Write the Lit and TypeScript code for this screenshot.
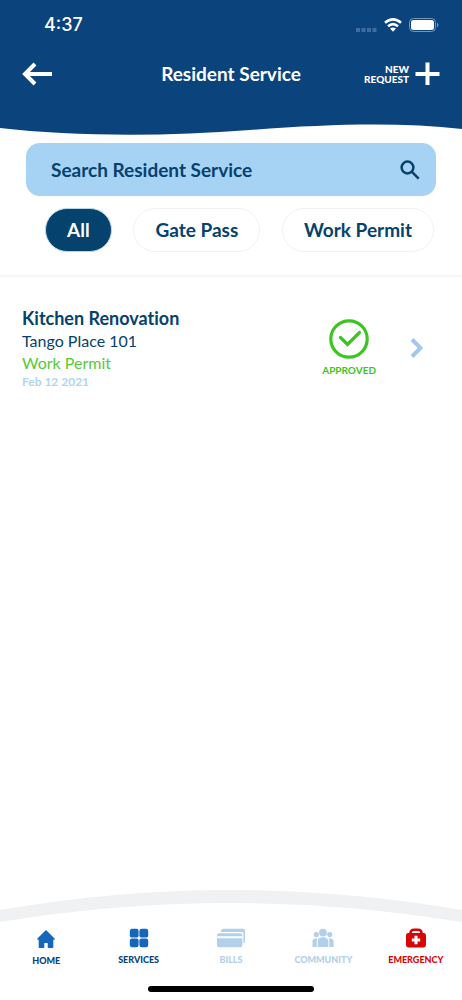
import { LitElement, html, css, svg } from "lit";
import { customElement, state } from "lit/decorators.js";

const icons: Record<string, unknown> = {
  home: svg`<svg width="20" height="20" viewBox="0 0 20 20" aria-hidden="true"><path fill="currentColor" stroke="currentColor" stroke-width="1.6" stroke-linejoin="round" d="M10 2 18 10H16.500V18.300H12.500V13.200H7.500V18.300H3.500V10H2Z"/></svg>`,
  services: svg`<svg width="20" height="20" viewBox="0 0 20 20" aria-hidden="true"><g fill="currentColor"><rect x=".8" y=".8" width="8.800" height="8.800" rx="2.200"/><rect x="10.400" y=".8" width="8.800" height="8.800" rx="2.200"/><rect x=".8" y="10.400" width="8.800" height="8.800" rx="2.200"/><rect x="10.400" y="10.400" width="8.800" height="8.800" rx="2.200"/></g></svg>`,
  bills: svg`<svg width="30" height="20" viewBox="0 0 30 20" aria-hidden="true"><path fill="currentColor" d="M4.500 4Q5.500 .8 8 .8H27Q29 .8 29 2.800V13Q29 15 27.400 15.600V5.500Q27.400 4 25.800 4ZM1 8.300Q1 5.200 3 5.200H24.400Q26.400 5.200 26.400 8.300ZM1 10.300H26.400V17.200Q26.400 19.200 24.400 19.200H3Q1 19.200 1 17.200Z"/></svg>`,
  community: svg`<svg width="22" height="20" viewBox="0 0 22 20" aria-hidden="true"><g fill="currentColor"><circle cx="11" cy="4.600" r="3.900"/><circle cx="4.300" cy="6.600" r="2.600"/><circle cx="17.700" cy="6.600" r="2.600"/><path d="M5.700 19V13.500Q5.700 9.200 11 9.200T16.300 13.500V19ZM.5 19V13.500Q.5 10.200 5.300 10.200 4.700 11.500 4.700 13.500V19ZM21.500 19V13.500Q21.500 10.200 16.700 10.200 17.300 11.500 17.300 13.500V19Z"/></g></svg>`,
  emergency: svg`<svg width="22" height="20" viewBox="0 0 22 20" aria-hidden="true"><path fill="none" stroke="currentColor" stroke-width="2.600" d="M5.500 6V5Q5.500 1.800 9 1.800H13Q16.500 1.800 16.500 5V6"/><rect x="1" y="5" width="20" height="14.500" rx="2.400" fill="currentColor"/><path stroke="#fff" stroke-width="3" d="M11 7.800V16.200M6.800 12H15.200"/></svg>`,
};

const tabs = [
  { id: "home", label: "HOME", tone: "home" },
  { id: "services", label: "SERVICES", tone: "active" },
  { id: "bills", label: "BILLS", tone: "muted" },
  { id: "community", label: "COMMUNITY", tone: "muted" },
  { id: "emergency", label: "EMERGENCY", tone: "alert" },
];

const requests = [
  { title: "Kitchen Renovation", place: "Tango Place 101", type: "Work Permit", date: "Feb 12 2021", status: "APPROVED" },
];

@customElement("app-root")
export class AppRoot extends LitElement {
  @state() private filter = "All";

  static styles = css`
    :host {
      display: flex;
      flex-direction: column;
      min-height: 100vh;
      background: #fff;
      color: #05426d;
      font-family: Lato, "Open Sans", sans-serif;
      font-variant-ligatures: none;
    }
    * { box-sizing: border-box; }
    svg { display: block; flex: none; }
    button, a { color: inherit; font: inherit; text-decoration: none; }
    button { background: none; border: 0; padding: 0; cursor: pointer; }
    .header { background: #0b437d; color: #fff; }
    .status-bar { display: flex; justify-content: space-between; align-items: center; height: 50px; padding: 0 23px 0 44px; }
    .time { font: 500 18px/24px Inter, sans-serif; }
    .signals { display: flex; align-items: center; gap: 7px; }
    .title-bar { display: grid; grid-template-columns: 1fr auto 1fr; align-items: center; height: 48px; padding: 0 22px; }
    .title { margin: 0; font-size: 19px; line-height: 24px; font-weight: 700; }
    .new { display: flex; align-items: center; justify-self: end; gap: 6px; text-align: right; font-size: 10px; line-height: 10px; font-weight: 900; }
    .back { justify-self: start; }
    .wave { width: 100%; height: 40px; background: #fff; }
    .search { display: flex; align-items: center; height: 53px; margin: 5px 26px 0; padding: 0 16px 0 25px; border-radius: 14px; background: #a6d2f4; }
    .search-input { flex: 1; min-width: 0; padding: 0; border: 0; outline: 0; background: none; color: #05426d; font: 700 19px/24px Lato, sans-serif; }
    .search-input::placeholder { color: inherit; opacity: 1; }
    .filters { display: flex; justify-content: space-between; padding: 12px 28px 23px 45px; border-bottom: 2px solid #f6f6f6; }
    .chip { height: 44px; padding: 0 21px; border: 1px solid #f0f2f3; border-radius: 22px; font-size: 19px; line-height: 24px; font-weight: 700; }
    .chip-on { background: #05426d; border-color: #b5d8ef; color: #fff; }
    .list { flex: 1; margin: 0; padding: 30px 0 0; list-style: none; }
    .request { display: flex; align-items: center; padding: 0 38px 0 22px; }
    .details { flex: 1; }
    .name { margin: 0; font-size: 18px; line-height: 23px; font-weight: 700; }
    .line { margin: 0; font-size: 16px; line-height: 22px; }
    .type { color: #56ca38; }
    .date { display: block; font-size: 12px; line-height: 15px; font-weight: 700; color: #b0d5ef; }
    .badge { display: flex; flex-direction: column; align-items: center; gap: 4px; margin-right: 34px; color: #3cc521; font-size: 10px; line-height: 14px; font-weight: 700; }
    .arc { width: 100%; height: 34px; }
    .tabs { display: grid; grid-template-columns: repeat(5, 1fr); }
    .tab { display: flex; flex-direction: column; align-items: center; gap: 6px; padding-top: 4px; font-size: 9px; line-height: 12px; font-weight: 900; }
    .home { padding-top: 5px; }
    .home, .active { color: #1467ba; }
    .home .tab-label, .active .tab-label { color: #07437b; }
    .muted { color: #b1d0eb; }
    .alert { color: #d90505; }
    .indicator { width: 36%; height: 6px; margin: 19px auto 8px; border-radius: 3px; background: #000; }
  `;

  render() {
    return html`
      <header class="header">
        <div class="status-bar">
          <span class="time">4:37</span>
          <span class="signals">
            <svg width="21" height="18" viewBox="0 0 21 18" aria-hidden="true"><path fill="#3d6c9f" d="M0 12h4v4H0zM5.500 12h4v4h-4zM11 12h4v4h-4zM16.500 12h4v4h-4z"/></svg>
            <svg width="18" height="14" viewBox="0 0 18 14" aria-hidden="true"><g fill="none" stroke="#fff" stroke-width="2.500"><path d="M1 4.800Q9-2 17 4.800M4 8.300Q9 4 14 8.300"/></g><path fill="#fff" d="M6 10.600Q9 8.400 12 10.600L9 13.700Z"/></svg>
            <svg width="30" height="14" viewBox="0 0 30 14" aria-hidden="true"><rect x=".5" y=".5" width="26" height="13" rx="4" fill="none" stroke="#7296bd"/><rect x="2" y="2" width="23" height="10" rx="2.500" fill="#fff"/><path fill="#7296bd" d="M28 4.500q3 2.500 0 5Z"/></svg>
          </span>
        </div>
        <div class="title-bar">
          <button class="back" aria-label="Back"><svg width="31" height="24" viewBox="0 0 31 24" aria-hidden="true"><path fill="none" stroke="#fff" stroke-width="4" d="M13 2 3 12 13 22M3 12H30"/></svg></button>
          <h1 class="title">Resident Service</h1>
          <button class="new"><span>NEW<br />REQUEST</span><svg width="25" height="24" viewBox="0 0 25 24" aria-hidden="true"><path stroke="#fff" stroke-width="4" d="M12.500 .5V23M.5 12H24.500"/></svg></button>
        </div>
        <svg class="wave" viewBox="0 0 462 40" preserveAspectRatio="none" aria-hidden="true"><path fill="#0b437d" d="M0 0H462V31C400 24 330 26 250 32C160 39 70 38 0 30Z"/></svg>
      </header>
      <label class="search">
        <input class="search-input" type="text" aria-label="Search Resident Service" placeholder="Search Resident Service" />
        <svg width="20" height="20" viewBox="0 0 20 20" aria-hidden="true"><g fill="none" stroke="#05426d" stroke-width="2.500"><circle cx="7.500" cy="7.500" r="5.900"/><path d="m11.700 11.700 7 7"/></g></svg>
      </label>
      <div class="filters" role="group" aria-label="Request type">
        ${["All", "Gate Pass", "Work Permit"].map((name) => html`<button class="chip ${this.filter === name ? "chip-on" : ""}" aria-pressed=${this.filter === name} @click=${() => (this.filter = name)}>${name}</button>`)}
      </div>
      <ul class="list">
        ${requests.filter((r) => this.filter === "All" || r.type === this.filter).map((r) => html`
          <li><a class="request" href="#request">
            <div class="details">
              <h2 class="name">${r.title}</h2>
              <p class="line">${r.place}</p>
              <p class="line type">${r.type}</p>
              <time class="date">${r.date}</time>
            </div>
            <div class="badge">
              <svg width="40" height="40" viewBox="0 0 40 40" aria-hidden="true"><g fill="none" stroke="currentColor" stroke-width="3.200"><circle cx="20" cy="20" r="18.200"/><path stroke-linecap="round" d="m11.500 18.500 7 7L30.500 13.500"/></g></svg>
              ${r.status}
            </div>
            <svg width="14" height="20" viewBox="0 0 14 20" aria-hidden="true"><path fill="none" stroke="#a3c8ee" stroke-width="4" d="m2 1.500 8.500 8.500L2 18.500"/></svg>
          </a></li>`)}
      </ul>
      <svg class="arc" viewBox="0 0 462 34" preserveAspectRatio="none" aria-hidden="true"><path fill="#f0f1f3" d="M0 20Q231-20 462 20V32Q231-6 0 32Z"/></svg>
      <nav class="tabs" aria-label="Main">
        ${tabs.map((t) => html`<a class="tab ${t.tone}" href="#${t.id}">${icons[t.id]}<span class="tab-label">${t.label}</span></a>`)}
      </nav>
      <div class="indicator"></div>
    `;
  }
}
